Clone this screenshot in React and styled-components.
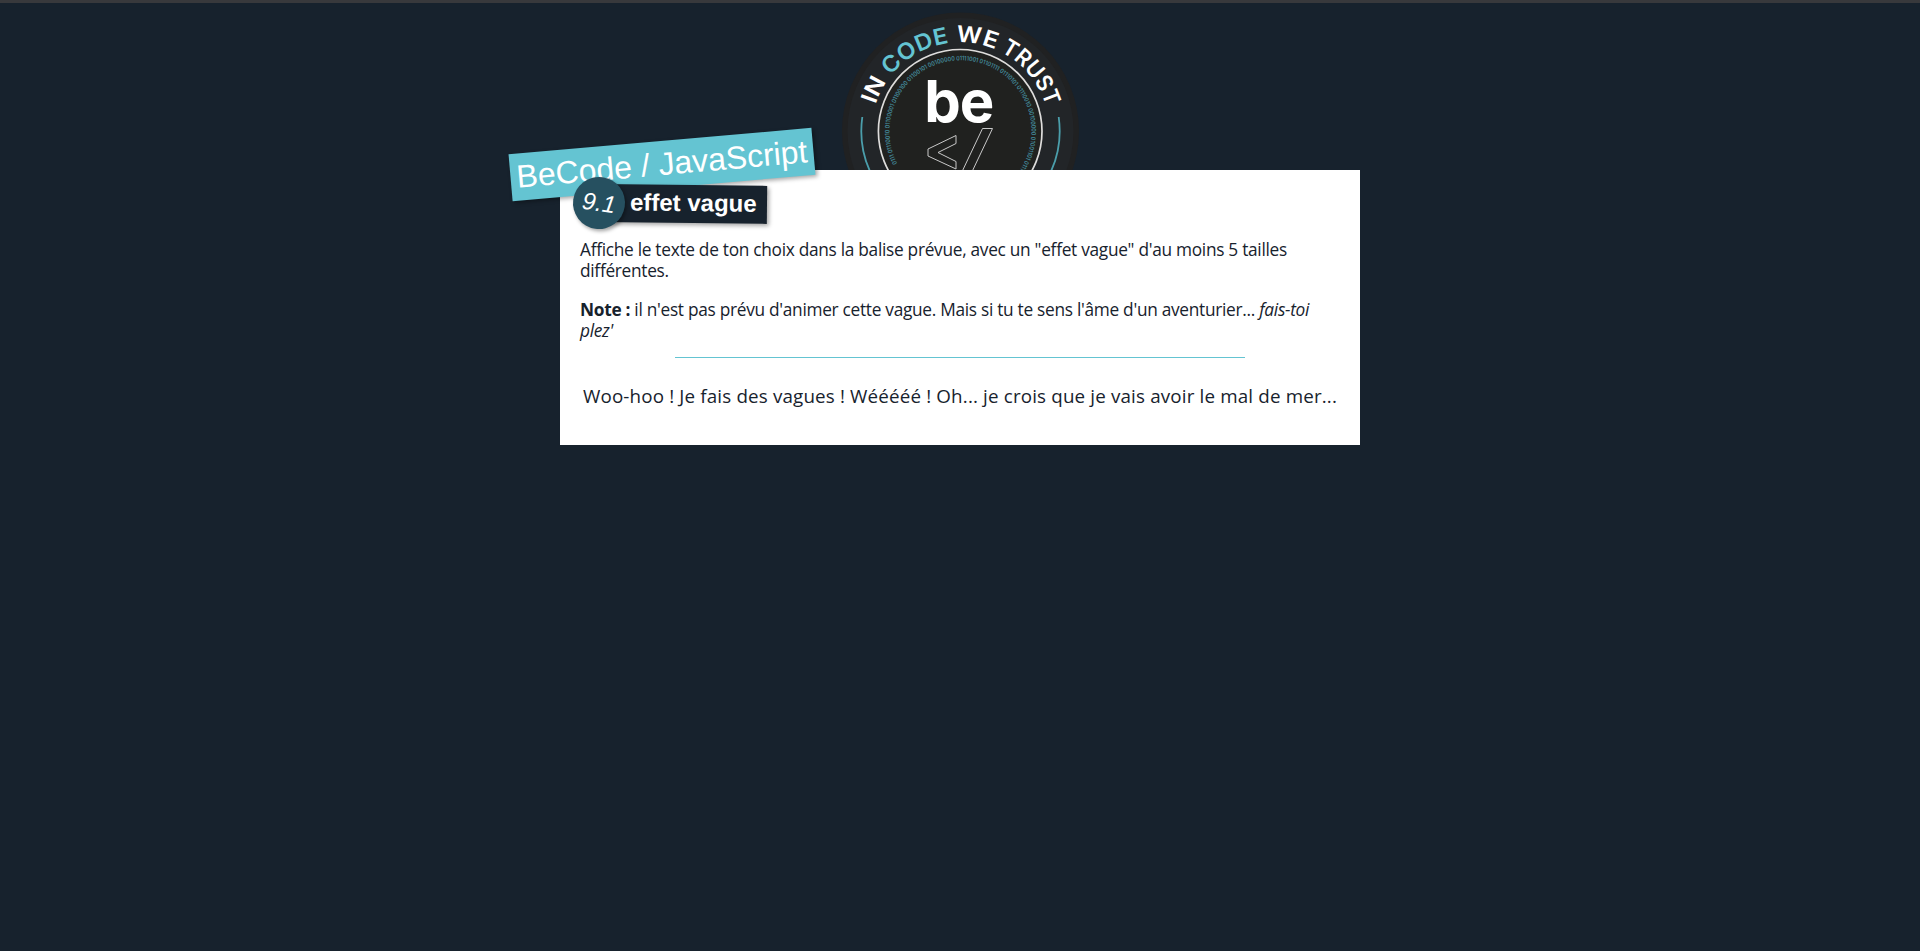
import React from "react";
import styled, { createGlobalStyle } from "styled-components";

const navy = "#17222d";
const teal = "#64c4d2";

const Global = createGlobalStyle`
  *, *::before, *::after { box-sizing: border-box; }
  html, body { margin: 0; padding: 0; background: ${navy}; }
  body { overflow: hidden; color: ${navy}; font-family: "Open Sans", "Noto Sans", sans-serif; }
`;

const Page = styled.div`
  min-height: 951px;
  border-top: 3px solid #38393c;
  display: flex;
  flex-direction: column;
  align-items: center;
`;

const Emblem = styled.svg`
  display: block;
  width: 260px;
  height: 167px;
`;

const Card = styled.main`
  width: 800px;
  height: 275px;
  padding: 0 20px;
  background: #fff;
  display: flex;
  flex-direction: column;
  position: relative;
`;

const Brand = styled.div`
  position: absolute;
  left: -50px;
  top: -29px;
  width: 304px;
  height: 47px;
  display: flex;
  align-items: center;
  justify-content: center;
  background: ${teal};
  color: #fff;
  font: 32px/47px "Liberation Sans", Arial, sans-serif;
  white-space: nowrap;
  transform: rotate(-5deg);
  box-shadow: 2px 2px 4px rgba(0, 0, 0, 0.35);
`;

const Heading = styled.h1`
  position: absolute;
  left: 39px;
  top: 15px;
  margin: 0;
  width: 168px;
  height: 38px;
  padding-left: 31px;
  background: ${navy};
  color: #fff;
  font: bold 24px/36px "Liberation Sans", Arial, sans-serif;
  white-space: nowrap;
  transform: rotate(0.6deg);
  box-shadow: 2px 2px 4px rgba(0, 0, 0, 0.35);
`;

const Badge = styled.span`
  position: absolute;
  left: 13px;
  top: 7px;
  width: 52px;
  height: 52px;
  border-radius: 50%;
  display: flex;
  align-items: center;
  justify-content: center;
  background: #265060;
  color: #fff;
  font: italic 24px/52px "Liberation Sans", Arial, sans-serif;
  transform: rotate(8deg);
  box-shadow: 2px 2px 4px rgba(0, 0, 0, 0.35);
`;

const Text = styled.p`
  margin: ${(p) => p.$top}px 0 0;
  font-size: 17.3px;
  line-height: 21px;
  letter-spacing: -0.29px;
  white-space: nowrap;
`;

const Rule = styled.hr`
  width: 570px;
  height: 1px;
  margin: 16px auto 0;
  border: 0;
  background: ${teal};
`;

const Wave = styled.p`
  margin: 24px 0 0;
  text-align: center;
  font-size: 18.8px;
  line-height: 28px;
  letter-spacing: 0.16px;
  white-space: nowrap;
`;

const R = 89;
const RB = 71;
const deg = (r) => (Math.PI * r) / 180;

const words = [
  { text: "IN", from: -72.5, to: -56, fill: "#fff" },
  { text: "CODE", from: -51.5, to: -7.5, fill: teal },
  { text: "WE", from: -3, to: 23, fill: "#fff" },
  { text: "TRUST", from: 26.5, to: 73.5, fill: "#fff" },
];

const binary =
  "0111 01110010 01100001 01100100 01100101 00100000 01111001 01101111 01110101 01110010 00100000 01001101 0111";

function Logo() {
  return (
    <Emblem viewBox="830 3 260 167" aria-label="BeCode">
      <defs>
        <path id="motto" d={`M ${960.5 - R} 131.3 A ${R} ${R} 0 0 1 ${960.5 + R} 131.3`} />
        <path id="binary" d="M 960.5 202.3 A 71 71 0 0 1 960.5 60.3 A 71 71 0 0 1 960.5 202.3" />
      </defs>
      <circle cx="960.5" cy="131" r="118.5" fill="#202122" />
      <circle cx="960.5" cy="131" r="113" fill="#222528" />
      <circle cx="960.2" cy="131.3" r="81.8" fill="#20211f" stroke="#dedddc" strokeWidth="1.7" />
      <path
        d="M 862.3 117 A 99 99 0 0 0 877 184 M 1058.7 117 A 99 99 0 0 1 1044 184"
        fill="none"
        stroke="#4b9eab"
        strokeWidth="1.8"
      />
      <g fontFamily="Inter, sans-serif" fontWeight="600" fontSize="22.5">
        {words.map((w) => (
          <text key={w.text} fill={w.fill}>
            <textPath
              href="#motto"
              startOffset={deg(R) * (90 + w.from)}
              textLength={deg(R) * (w.to - w.from)}
              lengthAdjust="spacingAndGlyphs"
            >
              {w.text}
            </textPath>
          </text>
        ))}
      </g>
      <text fontFamily="Inter, sans-serif" fontWeight="600" fontSize="6.2" fill="#43899a">
        <textPath
          href="#binary"
          startOffset={deg(RB) * (180 - 117)}
          textLength={deg(RB) * 239}
          lengthAdjust="spacingAndGlyphs"
        >
          {binary}
        </textPath>
      </text>
      <text x="924.3" y="121.5" fill="#fff" fontFamily="Inter, sans-serif" fontWeight="700" fontSize="58" textLength="70">
        be
      </text>
      <path
        d="M 956 135.5 L 928 149 V 156 L 956 169 V 161.5 L 938 152.5 L 956 143.5 Z M 982.5 128.5 H 992.5 L 970 176 H 960 Z"
        fill="none"
        stroke="#c9c9c9"
        strokeWidth="1"
      />
    </Emblem>
  );
}

export default function App() {
  return (
    <>
      <Global />
      <Page>
        <Logo />
        <Card>
          <Brand>BeCode / JavaScript</Brand>
          <Heading>effet vague</Heading>
          <Badge>9.1</Badge>
          <Text $top={69}>
            Affiche le texte de ton choix dans la balise prévue, avec un "effet vague" d'au moins 5 tailles<br />
            différentes.
          </Text>
          <Text $top={18}>
            <strong>Note :</strong> il n'est pas prévu d'animer cette vague. Mais si tu te sens l'âme d'un aventurier... <em>fais-toi<br />
            plez'</em>
          </Text>
          <Rule />
          <Wave>Woo-hoo ! Je fais des vagues ! Wééééé ! Oh... je crois que je vais avoir le mal de mer...</Wave>
        </Card>
      </Page>
    </>
  );
}
